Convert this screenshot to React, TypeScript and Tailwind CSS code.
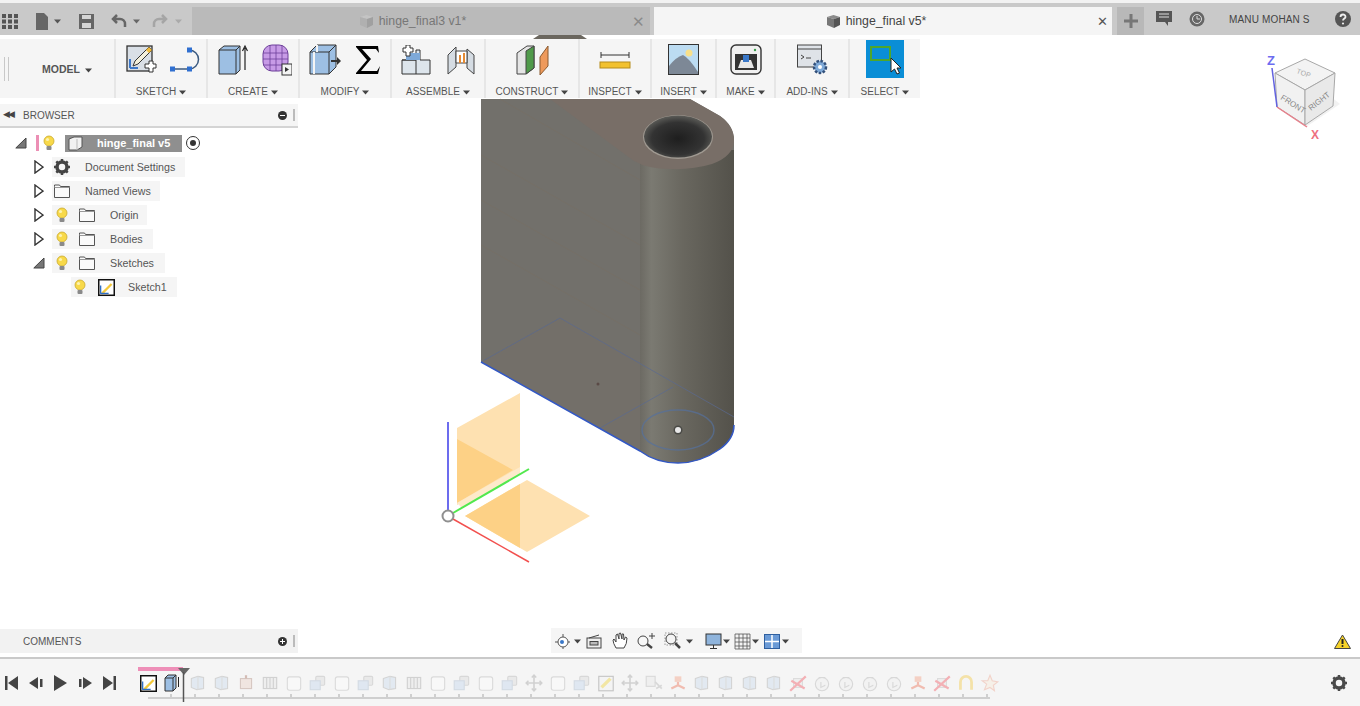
const font = "font-['Liberation_Sans',Arial,sans-serif]";

function Caret({ className = "fill-[#444]" }: { className?: string }) {
  return (
    <svg width="7" height="5" viewBox="0 0 7 5" className={`shrink-0 ${className}`}>
      <path d="M0 0.5h7L3.5 4.5z" />
    </svg>
  );
}

function Bulb() {
  return (
    <svg width="14" height="17" viewBox="0 0 14 17">
      <circle cx="7" cy="6" r="5" fill="#f8d949" stroke="#c9a92e" strokeWidth="0.8" />
      <circle cx="5.5" cy="4.5" r="1.6" fill="#fdf3b0" />
      <rect x="4.5" y="11" width="5" height="4" rx="1" fill="#8a8a8a" />
    </svg>
  );
}

function Folder() {
  return (
    <svg width="16" height="14" viewBox="0 0 16 14" fill="#fafafa" stroke="#555" strokeWidth="1">
      <path d="M0.5 2.5V1h5l1 1.5h9v11h-15z" />
      <path d="M0.5 3.5h15" stroke="#999" />
    </svg>
  );
}

function Twist({ open }: { open?: boolean }) {
  return open ? (
    <svg width="12" height="12" viewBox="0 0 12 12">
      <path d="M0.8 11L11 11V1z" fill="#777" stroke="#444" strokeWidth="1" />
    </svg>
  ) : (
    <svg width="10" height="14" viewBox="0 0 10 14" className="ml-[1px]">
      <path d="M1 1l8 6-8 6z" fill="#fff" stroke="#333" strokeWidth="1.4" />
    </svg>
  );
}

function SketchMini() {
  return (
    <svg width="17" height="17" viewBox="0 0 16 16">
      <rect x="0.7" y="0.7" width="14.6" height="14.6" fill="#fff" stroke="#111" strokeWidth="1.4" />
      <path d="M3 13L12 4l1.5 1.5L5 14z" fill="#f4c93a" />
      <path d="M2 13.5h8M2.5 13.5V6" stroke="#2f6fc4" strokeWidth="1.2" />
    </svg>
  );
}

function TreeRow({ twist, bulb, icon, label, pr }: {
  twist: "open" | "closed";
  bulb?: boolean;
  icon: React.ReactNode;
  label: string;
  pr: string;
}) {
  return (
    <div className="flex h-6 items-center pl-[33px]">
      <div className="flex w-[19px] items-center">
        <Twist open={twist === "open"} />
      </div>
      <div className={`flex h-5 items-center bg-[#f5f5f5] ${pr}`}>
        {bulb && (
          <div className="ml-[1px] flex w-[18px] justify-center">
            <Bulb />
          </div>
        )}
        <div className={`flex items-center ${bulb ? "ml-[8px]" : "ml-[2px]"}`}>{icon}</div>
        <span className="ml-[15px] text-[10.7px] text-[#555]">{label}</span>
      </div>
    </div>
  );
}

function ToolGroup({ w, label, children, border = true, shift = "", gap = "gap-[13px]" }: {
  w: string;
  label: string;
  children: React.ReactNode;
  border?: boolean;
  shift?: string;
  gap?: string;
}) {
  return (
    <div className={`flex h-full shrink-0 flex-col items-center ${w} ${border ? "border-r-2 border-[#e6e6e6]" : ""}`}>
      <div className={`flex h-[48px] items-center justify-center pb-[6px] ${gap} ${shift}`}>{children}</div>
      <div className="flex items-center gap-[3px] text-[10px] leading-[12px] text-[#555]">
        {label}
        <Caret />
      </div>
    </div>
  );
}

function CubeTab({ dark }: { dark?: boolean }) {
  return (
    <svg width="15" height="15" viewBox="0 0 15 15">
      <path d="M1 3l6.5-2L14 3l-6 2z" fill={dark ? "#8b8b8b" : "#c4c4c4"} />
      <path d="M1 3l7 2v9l-7-3z" fill={dark ? "#777" : "#b0b0b0"} />
      <path d="M8 5l6-2v8l-6 3z" fill={dark ? "#555" : "#a0a0a0"} />
    </svg>
  );
}

function TimelineIcon({ kind }: { kind: string }) {
  const box = (c: string) => (
    <>
      <path d="M3 5l6-2 5 1v10l-6 1-5-2z" fill={c} stroke="#c9c9c9" />
      <path d="M9 3v12" stroke="#d5d5d5" />
    </>
  );
  return (
    <svg width="20" height="20" viewBox="0 0 18 18" fill="none" className="shrink-0 opacity-75">
      {kind === "box" && box("#dce6f0")}
      {kind === "red" && <><rect x="4" y="5" width="10" height="9" fill="#efe0da" stroke="#cdb9b2" /><path d="M9 2v3" stroke="#c9a9a0" strokeWidth="2" /></>}
      {kind === "multi" && <><rect x="3" y="4" width="12" height="10" fill="#ececec" stroke="#c5c5c5" /><path d="M6 4v10M9 4v10M12 4v10" stroke="#c5c5c5" /></>}
      {kind === "sq" && <rect x="3" y="3.5" width="12" height="12" rx="2" fill="#fafafa" stroke="#d2d2d2" />}
      {kind === "stack" && <><rect x="7" y="3" width="8" height="8" rx="1" fill="#e6e6e6" stroke="#cfcfcf" /><rect x="2" y="7" width="9" height="8" fill="#d8e3f0" stroke="#c8d2de" /></>}
      {kind === "sketch" && <><rect x="2.5" y="3" width="13" height="13" fill="#f4f4f4" stroke="#b5b5b5" /><path d="M5 13L13 5" stroke="#f2e28a" strokeWidth="3" /></>}
      {kind === "move" && <path d="M9 2v14M2 9h14M7 4l2-2 2 2M7 14l2 2 2-2M4 7L2 9l2 2M14 7l2 2-2 2" stroke="#c5c5c5" strokeWidth="1.4" />}
      {kind === "mirror" && <><rect x="2" y="3" width="8" height="9" fill="#ededed" stroke="#d0d0d0" /><path d="M10 8l6 6M11 14l5-3" stroke="#cfcfcf" strokeWidth="1.5" /></>}
      {kind === "pink" && <><path d="M6 3h6v5H6z" fill="#f4c4b4" /><path d="M9 8v4M3 14l6-3 6 3" stroke="#f0a999" strokeWidth="2" /></>}
      {kind === "redx" && <><rect x="5" y="5" width="8" height="8" fill="#eee" stroke="#d4d4d4" /><path d="M2 16L16 3M3 7l12 7" stroke="#f39aa0" strokeWidth="2" /></>}
      {kind === "cyl" && <><circle cx="9" cy="10" r="6" fill="#f1f1f1" stroke="#cfcfcf" /><path d="M6 4h6M8 8v5l4-2" stroke="#cfcfcf" /></>}
      {kind === "yellow" && <path d="M4 15V8a5 5 0 0110 0v7" stroke="#f4dc8f" strokeWidth="2.5" />}
      {kind === "star" && <path d="M9 2l2 5 5 1-4 3 1 5-4-3-5 2 2-5-4-3 5 0z" fill="#f7efe4" stroke="#f1c8bc" />}
    </svg>
  );
}

const timelineKinds = [
  "box", "box", "red", "multi", "sq", "stack", "sq", "stack", "box", "multi", "sq", "stack", "sq", "stack", "move", "sq",
  "stack", "sketch", "move", "mirror", "pink", "box", "box", "box", "box", "redx", "cyl", "cyl", "cyl", "cyl", "pink", "redx", "yellow", "star",
];

export default function App() {
  return (
    <div className={`flex h-[706px] w-[1360px] flex-col overflow-hidden bg-white ${font}`}>
      {/* Title bar and document tabs */}
      <div className="h-[35px] shrink-0 border-t-[3px] border-[#f2f2f2] bg-[#c9c9c9]">
        <div className="flex h-[32px] items-stretch pt-[4px]">
          <div className="flex w-[192px] items-center">
            <svg width="16" height="16" viewBox="0 0 16 16" className="ml-[2px] fill-[#555]">
              <path d="M0 1h4v4H0zM6 1h4v4H6zM12 1h4v4h-4zM0 6.500h4v4H0zM6 6.500h4v4H6zM12 6.500h4v4h-4zM0 12h4v4H0zM6 12h4v4H6zM12 12h4v4h-4z" />
            </svg>
            <svg width="14" height="17" viewBox="0 0 14 17" className="ml-[17px] fill-[#666]">
              <path d="M1 0h8l4 4v13H1z" />
            </svg>
            <Caret className="ml-[5px] fill-[#555]" />
            <svg width="15" height="15" viewBox="0 0 15 15" className="ml-[18px]">
              <path d="M0 0h15v15H0z" fill="#666" />
              <path d="M3 1h9v4H3zM3 9h9v5H3z" fill="#d5d5d5" />
            </svg>
            <svg width="16" height="14" viewBox="0 0 16 14" fill="none" stroke="#666" strokeWidth="2.500" className="ml-[17px]">
              <path d="M6 1L2 5l4 4M2 5h7a5 5 0 015 5v3" />
            </svg>
            <Caret className="ml-[6px] fill-[#666]" />
            <svg width="16" height="14" viewBox="0 0 16 14" fill="none" stroke="#a5a5a5" strokeWidth="2.500" className="ml-[12px]">
              <path d="M10 1l4 4-4 4M14 5H7a5 5 0 00-5 5v3" />
            </svg>
            <Caret className="ml-[7px] fill-[#aaa]" />
          </div>
          <div className="relative flex w-[458px] items-center justify-center gap-[5px] bg-[#bababa] pr-[17px] text-[12.3px] text-[#777]">
            <CubeTab />
            hinge_final3 v1*
            <span className="absolute right-[5px] text-[15px] leading-none text-[#8a8a8a]">✕</span>
          </div>
          <div className="relative ml-[4px] flex w-[458px] items-center justify-center gap-[5px] bg-[#f5f5f5] pr-[14px] text-[12.3px] text-[#444]">
            <CubeTab dark />
            hinge_final v5*
            <span className="absolute right-[4px] text-[13px] leading-none text-[#555]">✕</span>
          </div>
          <div className="ml-[5px] flex w-[27px] items-center justify-center bg-[#b8b8b8]">
            <svg width="14" height="14" viewBox="0 0 14 14" stroke="#777" strokeWidth="3"><path d="M7 0v14M0 7h14" /></svg>
          </div>
          <svg width="16" height="15" viewBox="0 0 16 15" className="ml-[12px] mt-[4px]">
            <path d="M0 0h16v11h-4v4l-3-4H0z" fill="#555" />
            <path d="M3 3h10M3 6h10" stroke="#ddd" />
          </svg>
          <svg width="16" height="16" viewBox="0 0 16 16" className="ml-[17px] mt-[4px]">
            <circle cx="8" cy="8" r="7.500" fill="#666" />
            <circle cx="8" cy="8" r="4.500" fill="none" stroke="#ddd" />
            <path d="M8 5v3h3" stroke="#ddd" fill="none" />
          </svg>
          <span className="ml-[24px] mt-[5px] text-[10px] leading-[15px] tracking-[0.15px] text-[#444]">MANU MOHAN S</span>
          <svg width="16" height="16" viewBox="0 0 16 16" className="ml-[25px] mt-[4px]">
            <circle cx="8" cy="8" r="8" fill="#555" />
            <path d="M5.500 6a2.500 2.500 0 115 0c0 1.500-2.500 1.700-2.500 3.500" fill="none" stroke="#eee" strokeWidth="1.800" />
            <circle cx="8" cy="12.500" r="1.100" fill="#eee" />
          </svg>
        </div>
      </div>

      {/* Canvas and the panels that lie over it */}
      <div className="relative h-[624px] shrink-0 border-b-2 border-[#c9c9c9] bg-white">
        <svg width="1360" height="624" viewBox="0 35 1360 624" className="absolute inset-0">
          <defs>
            <linearGradient id="cyl" x1="640" x2="735" y1="0" y2="0" gradientUnits="userSpaceOnUse">
              <stop offset="0" stopColor="#6c6a63" />
              <stop offset="0.12" stopColor="#7b7a72" />
              <stop offset="0.45" stopColor="#69675f" />
              <stop offset="1" stopColor="#53514a" />
            </linearGradient>
            <radialGradient id="hole" cx="0.5" cy="0.55" r="0.55">
              <stop offset="0" stopColor="#1e1e1e" />
              <stop offset="0.7" stopColor="#333" />
              <stop offset="1" stopColor="#5c5c58" />
            </radialGradient>
          </defs>
          <path d="M533 39l6-4h42l6 4z" fill="#6b675f" />
          <path d="M481 99h209l30 17q14 10 14 24V425q0 14-14 24-20 14-42 14-22 0-38-12L481 362z" fill="#72706b" />
          <path d="M481 200L640 290M481 245L640 335M481 155L640 245M500 99L640 180" stroke="#7a6f62" strokeWidth="1" opacity="0.45" />
          <path d="M481 362L560 318 640 363 640 451z" fill="#766c62" opacity="0.25" />
          <path d="M640 150h94V425q0 14-14 24-20 14-42 14-22 0-38-12z" fill="url(#cyl)" />
          <path d="M550 99h140l30 17q14 10 14 24 0 16-22 24-20 6-42 5-22 0-36-8z" fill="#786e67" />
          <ellipse cx="678" cy="137" rx="35" ry="22" fill="#a09a92" />
          <ellipse cx="678" cy="136.500" rx="34" ry="21" fill="url(#hole)" />
          <path d="M481 362L560 318 734 417M673 387L600 428" stroke="#5a6a90" strokeWidth="1" fill="none" opacity="0.7" />
          <ellipse cx="678" cy="430" rx="36" ry="20" fill="none" stroke="#55709c" strokeWidth="1.500" opacity="0.7" />
          <path d="M481 362L640 451q16 12 38 12 22 0 42-14 14-10 14-24" fill="none" stroke="#3358c4" strokeWidth="1.500" />
          <circle cx="678" cy="430" r="4.500" fill="#4a4a46" />
          <circle cx="678" cy="430" r="3" fill="#e8e8e8" />

          <path d="M457 428L520 393V470L457 505z" fill="#fee1b1" />
          <path d="M457 439L513 470 457 503z" fill="#fdd186" />
          <path d="M457 503L520 467V474L462 508z" fill="#fdeacb" />
          <path d="M527 480L590 516 527 552 465 516 520 484z" fill="#fee1b1" />
          <path d="M465 516L520 484V548z" fill="#fdd186" />
          <path d="M448 422V510" stroke="#3b3be8" strokeWidth="1.500" />
          <path d="M453 513L529 469" stroke="#52e84e" strokeWidth="2" />
          <path d="M453 519L529 562" stroke="#f2504e" strokeWidth="1.500" />
          <circle cx="448" cy="516" r="5.500" fill="#fff" stroke="#8f8f8f" strokeWidth="2" />
          <circle cx="598" cy="384" r="1.500" fill="#5a4a46" />

          {/* View cube */}
          <path d="M1278 108L1306 127 1340 104 1330 96z" fill="#ececec" opacity="0.7" />
          <path d="M1275 73L1305 59 1335 73 1305 90z" fill="#f3f3f3" stroke="#a8a8a8" />
          <path d="M1275 73L1305 90V125L1277 107z" fill="#f1f1f1" stroke="#a8a8a8" />
          <path d="M1305 90L1335 73 1333 106 1305 125z" fill="#e9e9e9" stroke="#a8a8a8" />
          <path d="M1272 68L1277 107" stroke="#6262e0" strokeWidth="1.500" />
          <path d="M1277 107L1307 127" stroke="#e8808c" strokeWidth="1.500" />
          <text x="1297" y="76" fontSize="7" fill="#aaa" transform="rotate(20 1305 72)">TOP</text>
          <text x="1280" y="99" fontSize="8" fill="#888" transform="rotate(32 1280 99)">FRONT</text>
          <text x="1311" y="111" fontSize="8" fill="#888" transform="rotate(-38 1311 111)">RIGHT</text>
          <text x="1267" y="65" fontSize="13" fontWeight="700" fill="#6c6cf0">Z</text>
          <text x="1311" y="139" fontSize="12" fontWeight="700" fill="#ee7080">X</text>
        </svg>

        {/* Toolbar */}
        <div className="absolute left-0 top-[4px] flex h-[59px] w-[920px] bg-[#f5f5f5]">
          <div className="flex w-[116px] shrink-0 items-center border-r-2 border-[#e6e6e6] pt-[3px]">
            <div className="ml-[4px] mt-[-3px] h-[24px] w-[5px] border-x border-[#c8c8c8]" />
            <span className="ml-[33px] text-[10.5px] font-bold text-[#555]">MODEL</span>
            <Caret className="ml-[5px] fill-[#444]" />
          </div>
          <ToolGroup w="w-[92px]" label="SKETCH" shift="pl-[5px]">
            <svg width="31" height="31" viewBox="0 0 31 31">
              <rect x="1" y="2" width="25" height="25" fill="#d9dfe6" stroke="#333" strokeWidth="1.300" />
              <path d="M9 17L23 3l3 3-14 14-5 2z" fill="#f4f0dc" stroke="#333" />
              <path d="M23 3l3 3-3 3-3-3z" fill="#f0b93a" />
              <path d="M4 24h8M4 24V15" stroke="#3d78c8" strokeWidth="2" />
              <path d="M19 20h4v-3h4v3h3v4h-3v4h-4v-4h-4z" fill="#fff" stroke="#333" />
            </svg>
            <svg width="32" height="26" viewBox="0 0 32 26">
              <path d="M3 22h19M19 3a9.500 9.500 0 010 19" fill="none" stroke="#3b5a80" strokeWidth="1.500" />
              <rect x="0" y="19.500" width="5" height="5" fill="#2f6fd0" />
              <rect x="17" y="19.500" width="5" height="5" fill="#2f6fd0" />
              <rect x="17" y="0.500" width="5" height="5" fill="#2f6fd0" />
            </svg>
          </ToolGroup>
          <ToolGroup w="w-[92px]" label="CREATE" shift="pl-[3px]" gap="gap-[14px]">
            <svg width="30" height="32" viewBox="0 0 30 32">
              <path d="M1 6l5-4h16v24l-4 4H1z" fill="#9dbfe3" stroke="#333" />
              <path d="M1 6h17v24M18 6l4-4" fill="none" stroke="#333" />
              <path d="M27 26V4M24.500 7L27 2l2.500 5" stroke="#222" fill="none" strokeWidth="1.200" />
            </svg>
            <svg width="30" height="32" viewBox="0 0 30 32">
              <rect x="1" y="1" width="25" height="26" rx="9" fill="#c79be6" stroke="#6d3f9a" />
              <path d="M1 9h25M1 15h25M1 21h25M8 1v26M14 1v26M20 1v26" stroke="#6d3f9a" strokeWidth="0.800" />
              <rect x="20" y="20" width="10" height="11" fill="#f4f4f4" stroke="#333" />
              <path d="M23 23l4 2.500-4 2.500z" fill="#333" />
            </svg>
          </ToolGroup>
          <ToolGroup w="w-[92px]" label="MODIFY" gap="gap-[14px]">
            <svg width="32" height="32" viewBox="0 0 32 32">
              <path d="M1 8l7-7h19v22l-7 7H1z" fill="#9dbfe3" stroke="#333" />
              <path d="M1 8h19v22M20 8l7-7" fill="none" stroke="#333" />
              <path d="M5 8v22M8 1v7" stroke="#f4f4f4" strokeWidth="2" />
              <path d="M22 16h6v-3l4 4-4 4v-3h-6z" fill="#333" />
            </svg>
            <svg width="26" height="30" viewBox="0 0 26 30">
              <path d="M1 1h22l1 7-3-4H7l9 10L6 26h16l3-5-2 8H1v-1l11-13L1 2z" fill="#000" />
            </svg>
          </ToolGroup>
          <ToolGroup w="w-[94px]" label="ASSEMBLE" gap="gap-[15px]">
            <svg width="30" height="30" viewBox="0 0 30 30">
              <path d="M1 15h14V5h4v10h10v14H1z" fill="#dde5ec" stroke="#333" />
              <path d="M1 15h14v14" fill="none" stroke="#333" />
              <path d="M5 8h14v7H5z" fill="#7ea9d8" />
              <path d="M5 0h4v3h3v4H9v4H5V7H2V3h3z" fill="#fff" stroke="#333" />
            </svg>
            <svg width="30" height="30" viewBox="0 0 30 30">
              <path d="M2 10l8-8v20l-8 7zM21 4l7 6v19l-7-6z" fill="#d5dce3" stroke="#444" />
              <path d="M10 6h11v12H10z" fill="#fff" stroke="#444" />
              <path d="M14 10v8M18 8v10" stroke="#e58a33" strokeWidth="2" />
            </svg>
          </ToolGroup>
          <ToolGroup w="w-[94px]" label="CONSTRUCT">
            <svg width="33" height="30" viewBox="0 0 33 30">
              <path d="M1 8l10-7h7v22l-8 6H1z" fill="#e5e5e5" stroke="#444" />
              <path d="M10 6l8-5v22l-8 6z" fill="#4f9a4a" stroke="#444" />
              <path d="M24 12L32 1v20l-8 9z" fill="#ee9a5c" stroke="#8a5a30" />
            </svg>
          </ToolGroup>
          <ToolGroup w="w-[72px]" label="INSPECT">
            <svg width="32" height="22" viewBox="0 0 30 22">
              <path d="M1 3v6M29 3v6M1 6h28" stroke="#333" />
              <rect x="0" y="13" width="30" height="6" fill="#f2c12e" stroke="#b58b1a" />
            </svg>
          </ToolGroup>
          <ToolGroup w="w-[65px]" label="INSERT">
            <svg width="31" height="31" viewBox="0 0 31 31">
              <rect x="0.500" y="0.500" width="30" height="30" fill="#bcdcf2" stroke="#333" />
              <circle cx="21" cy="9" r="3.500" fill="#f8e08a" />
              <path d="M1 30V22Q8 13 15 11q6 3 15 17v2z" fill="#7d8896" />
            </svg>
          </ToolGroup>
          <ToolGroup w="w-[59px]" label="MAKE">
            <svg width="32" height="31" viewBox="0 0 32 31">
              <rect x="1" y="1" width="30" height="29" rx="5" fill="#f0f0f0" stroke="#333" strokeWidth="1.400" />
              <rect x="5" y="10" width="22" height="16" fill="#333" />
              <path d="M8 24h16l-3-8H11z" fill="#e8e8e8" />
              <rect x="13" y="11" width="6" height="7" fill="#3a78c8" />
              <circle cx="25" cy="6" r="1.200" fill="#3a9a4a" />
            </svg>
          </ToolGroup>
          <ToolGroup w="w-[74px]" label="ADD-INS">
            <svg width="31" height="31" viewBox="0 0 31 31">
              <rect x="0.500" y="1" width="24" height="22" fill="#dfe3e8" stroke="#444" />
              <path d="M1 5h23" stroke="#444" />
              <path d="M4 11l3 2-3 2M9 14h5" stroke="#444" fill="none" />
              <circle cx="23" cy="23" r="6" fill="#7ea9d8" stroke="#33507a" strokeWidth="2.500" strokeDasharray="2.500 1.500" />
              <circle cx="23" cy="23" r="2" fill="#fff" />
            </svg>
          </ToolGroup>
          <ToolGroup w="w-[70px]" label="SELECT" border={false}>
            <div className="relative mt-[-1px] h-[38px] w-[38px] bg-[#0a8ed6]">
              <div className="absolute left-[4px] top-[6px] h-[15px] w-[21px] border-2 border-[#4fa62a]" />
              <svg width="12" height="18" viewBox="0 0 12 18" className="absolute left-[24px] top-[17px]">
                <path d="M1 1v14l3.500-3 2.500 5 2.500-1-2.500-5H11z" fill="#fff" stroke="#222" />
              </svg>
            </div>
          </ToolGroup>
        </div>

        {/* Browser panel */}
        <div className="absolute left-0 top-[69px] w-[298px]">
          <div className="flex h-[24px] items-center border-b-2 border-[#d4d4d4] bg-[#f5f5f5] px-[3px]">
            <span className="text-[9px] tracking-[-2px] text-[#444]">◀◀</span>
            <span className="ml-[10px] flex-1 text-[10px] text-[#555]">BROWSER</span>
            <svg width="9" height="9" viewBox="0 0 9 9"><circle cx="4.500" cy="4.500" r="4.500" fill="#333" /><path d="M2 4.500h5" stroke="#fff" /></svg>
            <div className="ml-[6px] h-[12px] w-[2px] bg-[#bbb]" />
          </div>
          <div className="pt-[3px]">
            <div className="flex h-6 items-center pl-[15px]">
              <div className="flex w-[21px]"><Twist open /></div>
              <div className="h-[16px] w-[3px] bg-[#ec8fb5]" />
              <div className="ml-[1px] flex w-[18px] justify-center"><Bulb /></div>
              <div className="ml-[7px] flex h-[17px] w-[117px] items-center bg-[#8f8f8f]">
                <svg width="16" height="15" viewBox="0 0 16 15" className="ml-[3px]">
                  <path d="M1 3l5-2h8v10l-5 3H1z" fill="#f2f2f2" stroke="#555" />
                  <path d="M9 3v11" stroke="#bbb" />
                </svg>
                <span className="ml-[13px] text-[11px] font-bold text-white">hinge_final v5</span>
              </div>
              <div className="ml-[4px] flex h-[14px] w-[14px] items-center justify-center rounded-full border border-[#333] bg-white">
                <div className="h-[6px] w-[6px] rounded-full bg-[#333]" />
              </div>
            </div>
            <TreeRow
              twist="closed"
              icon={
                <svg width="16" height="16" viewBox="0 0 16 16">
                  <circle cx="8" cy="8" r="5" fill="none" stroke="#444" strokeWidth="3.500" />
                  <path d="M8 0v3M8 13v3M0 8h3M13 8h3M2.300 2.300l2 2M11.700 11.700l2 2M2.300 13.700l2-2M11.700 4.300l2-2" stroke="#444" strokeWidth="2.500" />
                </svg>
              }
              label="Document Settings"
              pr="pr-[10px]"
            />
            <TreeRow twist="closed" icon={<Folder />} label="Named Views" pr="pr-[9px]" />
            <TreeRow twist="closed" bulb icon={<Folder />} label="Origin" pr="pr-[8px]" />
            <TreeRow twist="closed" bulb icon={<Folder />} label="Bodies" pr="pr-[10px]" />
            <TreeRow twist="open" bulb icon={<Folder />} label="Sketches" pr="pr-[11px]" />
            <div className="flex h-6 items-center pl-[71px]">
              <div className="flex h-5 items-center bg-[#f5f5f5] pr-[10px]">
                <div className="flex w-[18px] justify-center"><Bulb /></div>
                <div className="ml-[9px] flex"><SketchMini /></div>
                <span className="ml-[13px] text-[10.7px] text-[#555]">Sketch1</span>
              </div>
            </div>
          </div>
        </div>

        {/* Comments panel */}
        <div className="absolute bottom-[4px] left-0 flex h-[24px] w-[298px] items-center bg-[#f2f2f2] pl-[23px] pr-[3px]">
          <span className="flex-1 text-[10px] text-[#555]">COMMENTS</span>
          <svg width="9" height="9" viewBox="0 0 9 9"><circle cx="4.500" cy="4.500" r="4.500" fill="#333" /><path d="M2 4.500h5M4.500 2v5" stroke="#fff" /></svg>
          <div className="ml-[6px] h-[12px] w-[2px] bg-[#bbb]" />
        </div>

        {/* Navigation bar */}
        <div className="absolute bottom-[4px] left-[551px] flex h-[25px] w-[251px] items-center bg-[#f5f5f5] pl-[3px] pt-[1px]">
          <svg width="17" height="17" viewBox="0 0 17 17" fill="none" stroke="#555">
            <circle cx="9" cy="9" r="5" fill="#fff" />
            <path d="M1 9h3M14 9h2M9 1v3M9 14v2" />
            <circle cx="8" cy="9" r="2" fill="#3a78c8" stroke="none" />
          </svg>
          <Caret className="ml-[3px] fill-[#444]" />
          <svg width="16" height="15" viewBox="0 0 16 15" className="ml-[5px]" fill="#eee" stroke="#444">
            <rect x="1" y="4" width="14" height="10" />
            <rect x="4" y="7.500" width="8" height="3.500" fill="#bbb" />
            <path d="M3 4l10-3" />
          </svg>
          <svg width="18" height="18" viewBox="0 0 18 18" className="ml-[9px]" fill="#fff" stroke="#444">
            <path d="M5 16Q2 11 2 8l1-1 2 3V3l1.500-1L8 7V1.500L9.500 1 11 7V2l1.500 0L13 8l1.500-3L16 6q0 6-3 10z" />
          </svg>
          <svg width="20" height="18" viewBox="0 0 20 18" className="ml-[7px]" fill="none" stroke="#444">
            <circle cx="7" cy="9" r="5" fill="#f8f8f8" />
            <path d="M11 12l5 4" strokeWidth="2.500" />
            <path d="M16 1v6M13 4h6" />
          </svg>
          <svg width="18" height="18" viewBox="0 0 18 18" className="ml-[8px]" fill="none" stroke="#444">
            <rect x="1" y="1" width="12" height="12" strokeDasharray="1.500 1.500" stroke="#999" />
            <circle cx="7" cy="7" r="5" fill="#f4f4f4" />
            <path d="M11 11l5 5" strokeWidth="2.500" />
          </svg>
          <Caret className="ml-[4px] fill-[#444]" />
          <svg width="17" height="17" viewBox="0 0 17 17" className="ml-[12px]">
            <rect x="1" y="1" width="15" height="11" fill="#8fb4dc" stroke="#333" />
            <path d="M8.500 12v3M5 15.500h7" stroke="#333" />
          </svg>
          <Caret className="ml-[1px] fill-[#444]" />
          <svg width="17" height="17" viewBox="0 0 17 17" className="ml-[4px]" fill="#f4f4f4" stroke="#555">
            <path d="M1 1h15v15H1zM1 5h15M1 9h15M1 13h15M5 1v15M9 1v15M13 1v15" strokeWidth="0.800" />
          </svg>
          <Caret className="ml-[1px] fill-[#444]" />
          <svg width="16" height="15" viewBox="0 0 16 15" className="ml-[5px]">
            <rect x="0.500" y="0.500" width="15" height="14" fill="#6a9ad6" stroke="#2f5f9f" />
            <path d="M8 1v13M1 7.500h14" stroke="#fff" strokeWidth="1.500" />
          </svg>
          <Caret className="ml-[2px] fill-[#444]" />
        </div>

        {/* Warning */}
        <svg width="17" height="15" viewBox="0 0 17 15" className="absolute bottom-[8px] left-[1334px]">
          <path d="M8.500 1L16.500 14.500H0.500z" fill="#f6d32a" stroke="#444" strokeWidth="1" />
          <path d="M8.500 5v5" stroke="#222" strokeWidth="2" />
          <circle cx="8.500" cy="12" r="1" fill="#222" />
        </svg>
      </div>

      {/* Timeline */}
      <div className="relative flex h-[47px] items-center bg-[#f5f5f5]">
        <div className="ml-[5px] flex items-center gap-[11px] pt-[1px]">
          <svg width="13" height="14" viewBox="0 0 13 14" className="fill-[#444]"><path d="M0 0h2.500v14H0zM13 0v14L3 7z" /></svg>
          <svg width="14" height="12" viewBox="0 0 14 12" className="fill-[#444]"><path d="M9 0v12L0 6zM11 2h2.500v8H11z" /></svg>
          <svg width="13" height="16" viewBox="0 0 13 16" className="fill-[#444]"><path d="M0 0l13 8-13 8z" /></svg>
          <svg width="14" height="12" viewBox="0 0 14 12" className="fill-[#444]"><path d="M5 0v12l9-6zM1 2h2.500v8H1z" /></svg>
          <svg width="13" height="14" viewBox="0 0 13 14" className="fill-[#444]"><path d="M10.500 0H13v14h-2.500zM0 0v14l10-7z" /></svg>
        </div>
        {/* Feature track */}
        <div className="absolute left-[138px] top-[8px] h-[4px] w-[45px] bg-[#ee8fb8]" />
        <svg width="12" height="34" viewBox="0 0 12 34" className="absolute left-[178px] top-[9px] z-10">
          <path d="M0 0h12L6 7z" fill="#666" />
          <path d="M5.500 4v30" stroke="#555" strokeWidth="1.500" />
        </svg>
        <div className="absolute left-[148px] top-[14px] w-[842px]">
          <div className="flex items-center">
            <div className="ml-[-8px] flex h-[20px] w-[24px] shrink-0 items-center">
              <SketchMini />
            </div>
            <div className="flex h-[20px] w-[24px] shrink-0 items-center">
              <svg width="16" height="18" viewBox="0 0 16 18">
                <path d="M1 4l3-3h8v13l-3 3H1z" fill="#9dbfe3" stroke="#333" />
                <path d="M1 4h8v13M9 4l3-3" fill="none" stroke="#333" />
                <path d="M14.500 13V3" stroke="#222" />
              </svg>
            </div>
            {timelineKinds.map((kind, i) => (
              <div key={i} className="flex h-[20px] w-[24px] shrink-0 items-center">
                <TimelineIcon kind={kind} />
              </div>
            ))}
          </div>
          <div className="mt-[1px] flex h-[5px] w-[842px] border-b-2 border-[#cfcfcf]">
            {Array.from({ length: 35 }).map((_, i) => (
              <div key={i} className="h-[4px] w-[24px] border-r-2 border-[#cfcfcf]" />
            ))}
          </div>
        </div>
        <svg width="18" height="18" viewBox="0 0 18 18" className="absolute left-[1330px] top-[15px]">
          <circle cx="9" cy="9" r="5" fill="none" stroke="#4a4a4a" strokeWidth="3.500" />
          <path d="M9 1v3M9 14v3M1 9h3M14 9h3M3.300 3.300l2 2M12.700 12.700l2 2M3.300 14.700l2-2M12.700 5.300l2-2" stroke="#4a4a4a" strokeWidth="2.500" />
        </svg>
      </div>
    </div>
  );
}
